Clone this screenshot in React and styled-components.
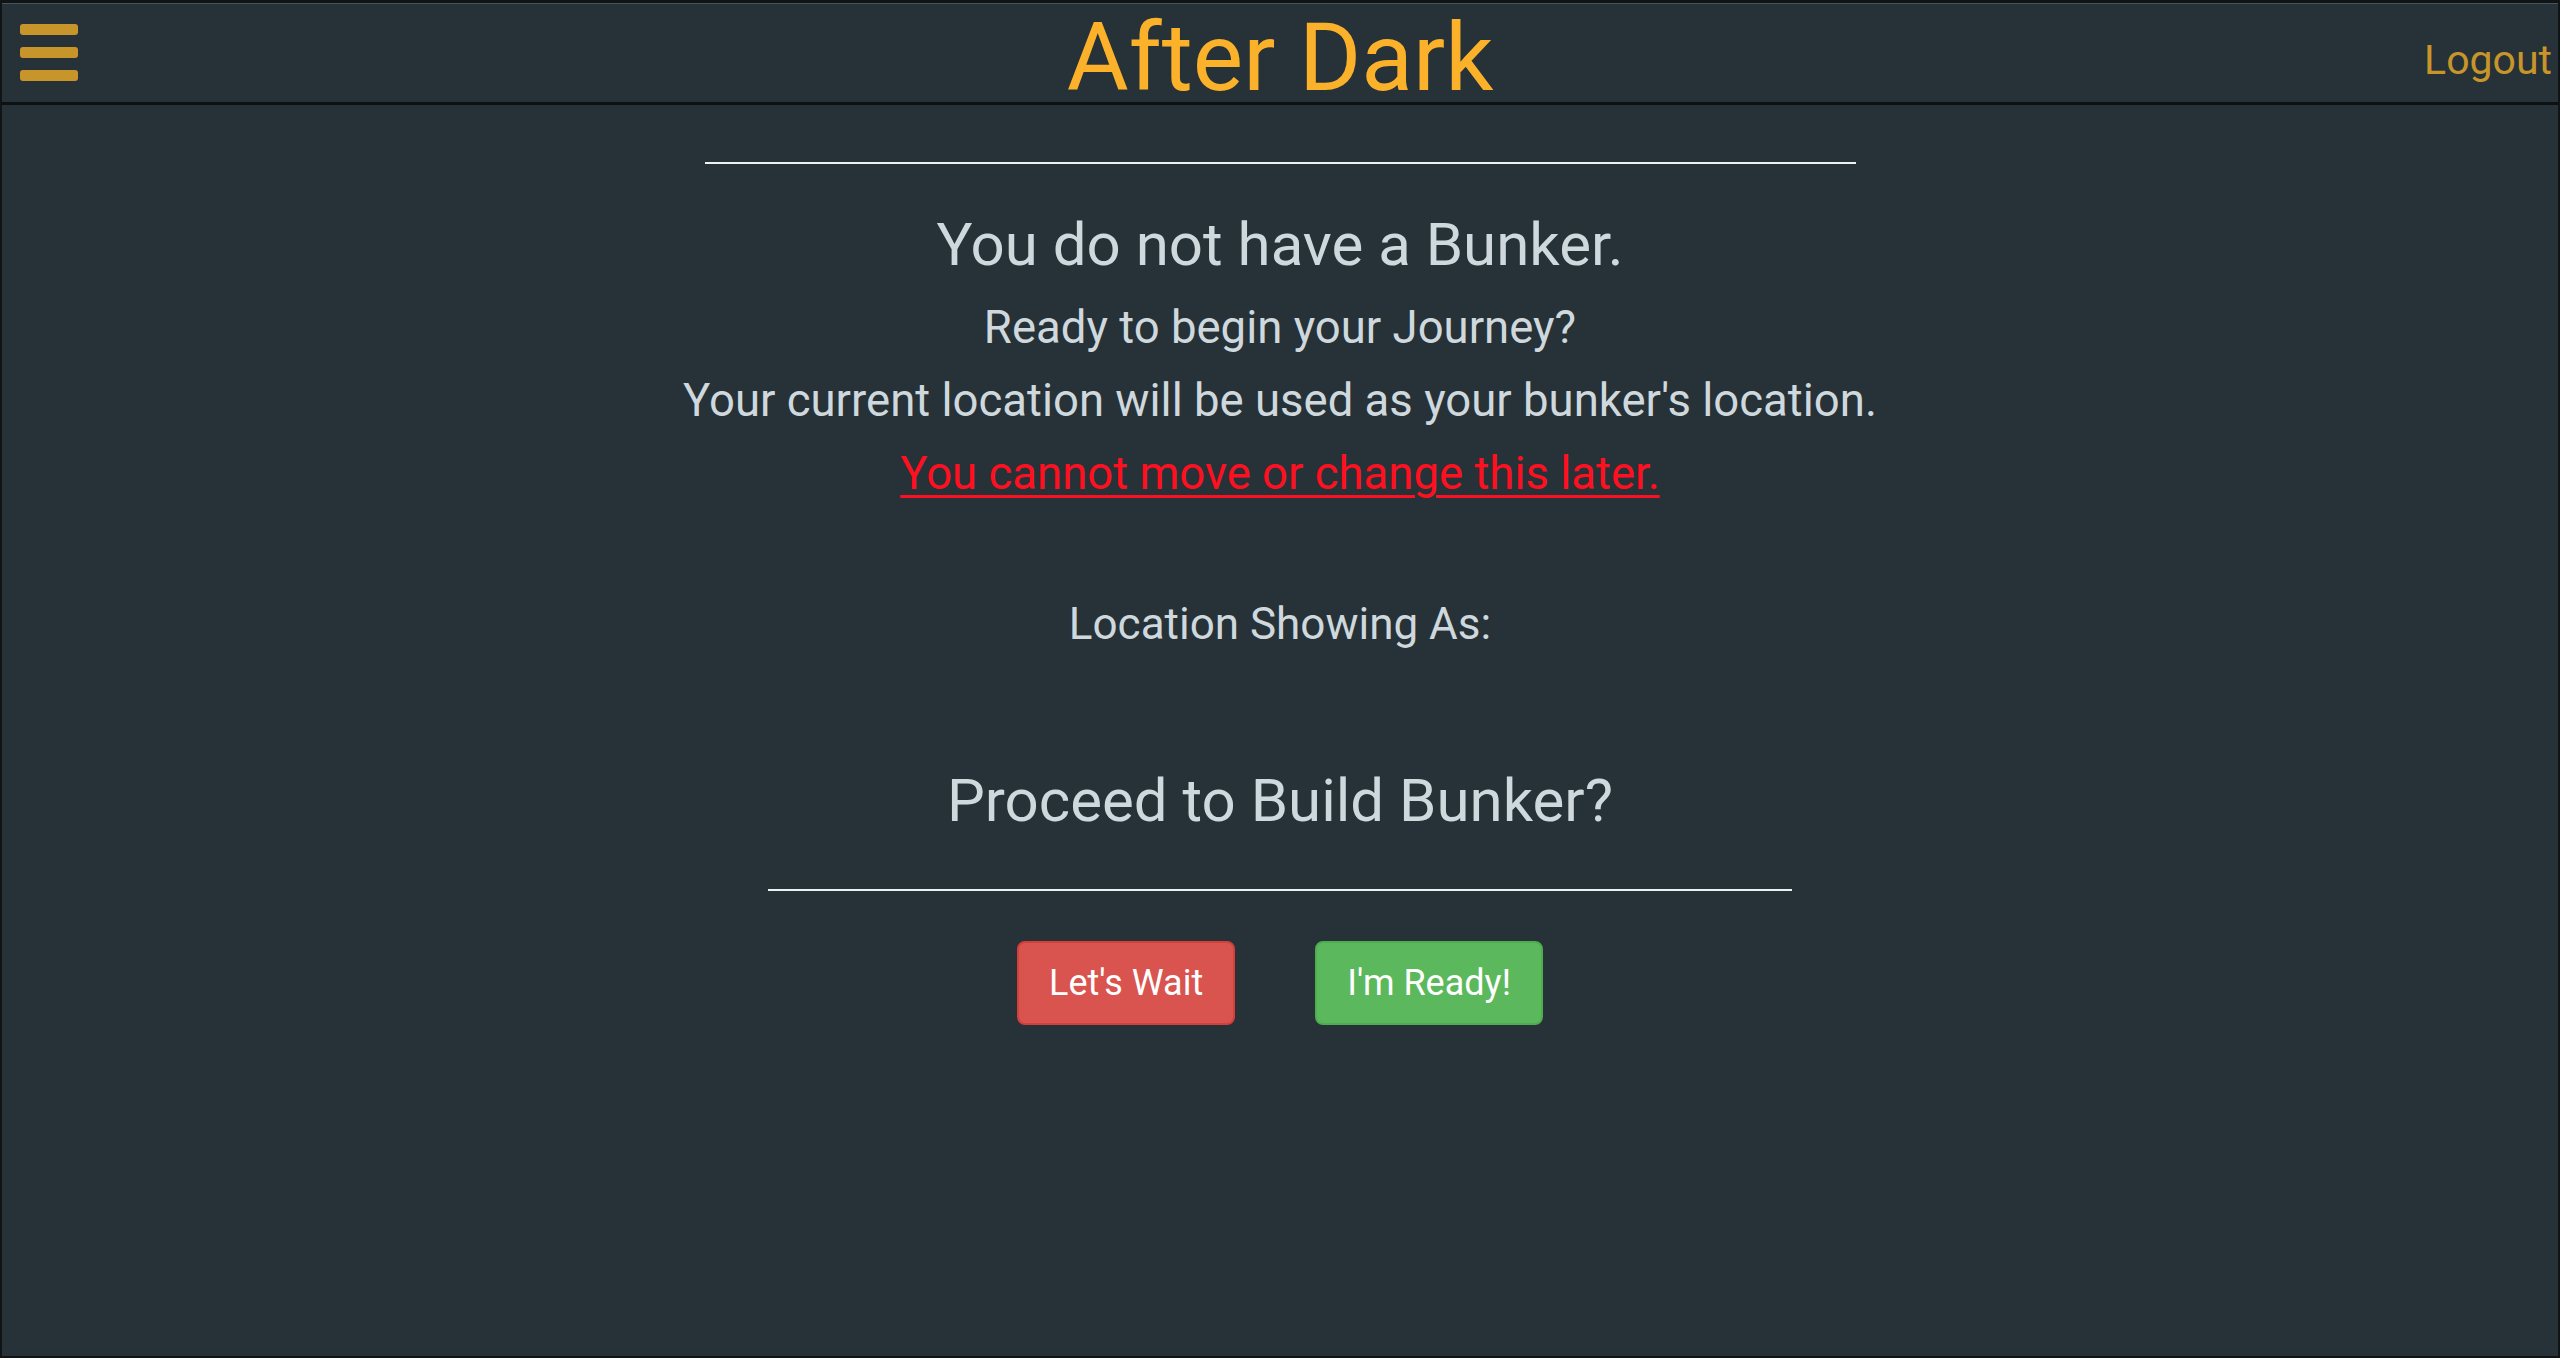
import React from "react"
import styled, { createGlobalStyle } from "styled-components"

const GlobalStyle = createGlobalStyle`
  html, body {
    margin: 0;
    padding: 0;
    height: 100%;
    background: #263238;
  }
  body {
    font-family: Roboto, "Liberation Sans", sans-serif;
    color: #cfd8dc;
  }
  #root {
    min-height: 100%;
  }
`

const Frame = styled.div`
  box-sizing: border-box;
  min-height: 1358px;
  border: 2px solid #0f1417;
  border-top: 3px solid #0f1417;
  background: #263238;
  display: flex;
  flex-direction: column;
`

const Header = styled.header`
  position: relative;
  box-sizing: border-box;
  height: 102px;
  padding-top: 8px;
  display: flex;
  align-items: center;
  justify-content: center;
  background: #263238;
  border-top: 1px solid #4b5358;
  border-bottom: 3px solid #0c1114;
`

const MenuButton = styled.button`
  position: absolute;
  left: 18px;
  top: 20px;
  display: flex;
  flex-direction: column;
  gap: 12px;
  padding: 0;
  border: 0;
  background: transparent;
  cursor: pointer;
`

const Bar = styled.span`
  display: block;
  width: 58px;
  height: 11px;
  border-radius: 3px;
  background: #c8952a;
`

const Brand = styled.h1`
  margin: 0;
  font-size: 95px;
  font-weight: 400;
  line-height: 1;
  color: #fbb12a;
`

const LogoutLink = styled.a`
  position: absolute;
  right: 6px;
  top: 32px;
  font-size: 41px;
  color: #c8952a;
  text-decoration: none;
  cursor: pointer;
`

const Main = styled.main`
  display: flex;
  flex-direction: column;
  align-items: center;
  text-align: center;
  padding-top: 57px;
`

const Rule = styled.hr`
  margin: ${(p) => p.$mt || 0}px 0 0;
  width: ${(p) => p.$width}px;
  height: 2px;
  border: 0;
  background: #eef1f2;
`

const Heading = styled.h2`
  margin: ${(p) => p.$mt || 0}px 0 0;
  font-size: 60px;
  font-weight: 400;
  line-height: 72px;
  color: #cfd8dc;
`

const Line = styled.p`
  margin: ${(p) => p.$mt || 0}px 0 0;
  font-size: ${(p) => p.$size || 45.5}px;
  line-height: 73px;
  color: ${(p) => (p.$warn ? "#ff1020" : "#cfd8dc")};
  text-decoration: ${(p) => (p.$warn ? "underline" : "none")};
  text-decoration-thickness: 3px;
  text-underline-offset: 6px;
`

const Actions = styled.div`
  display: flex;
  gap: 80px;
  margin-top: 50px;
`

const Button = styled.button`
  box-sizing: border-box;
  height: 84px;
  padding: 0 30px;
  font-family: Roboto, "Liberation Sans", sans-serif;
  font-size: 36px;
  color: #fff;
  border-radius: 8px;
  border: 2px solid ${(p) => (p.$tone === "danger" ? "#d43f3a" : "#4cae4c")};
  background: ${(p) => (p.$tone === "danger" ? "#d9534f" : "#5cb85c")};
  cursor: pointer;
`

const App = () => {
  return (
    <>
      <GlobalStyle />
      <Frame>
        <Header>
          <MenuButton aria-label="menu">
            <Bar />
            <Bar />
            <Bar />
          </MenuButton>
          <Brand>After Dark</Brand>
          <LogoutLink>Logout</LogoutLink>
        </Header>
        <Main>
          <Rule $width={1151} />
          <Heading $mt={45}>You do not have a Bunker.</Heading>
          <Line $mt={10}>Ready to begin your Journey?</Line>
          <Line>Your current location will be used as your bunker's location.</Line>
          <Line $warn>You cannot move or change this later.</Line>
          <Line $mt={78} $size={44}>Location Showing As:</Line>
          <Heading $mt={104}>Proceed to Build Bunker?</Heading>
          <Rule $width={1024} $mt={52} />
          <Actions>
            <Button $tone="danger">Let's Wait</Button>
            <Button $tone="success">I'm Ready!</Button>
          </Actions>
        </Main>
      </Frame>
    </>
  )
}

export default App
